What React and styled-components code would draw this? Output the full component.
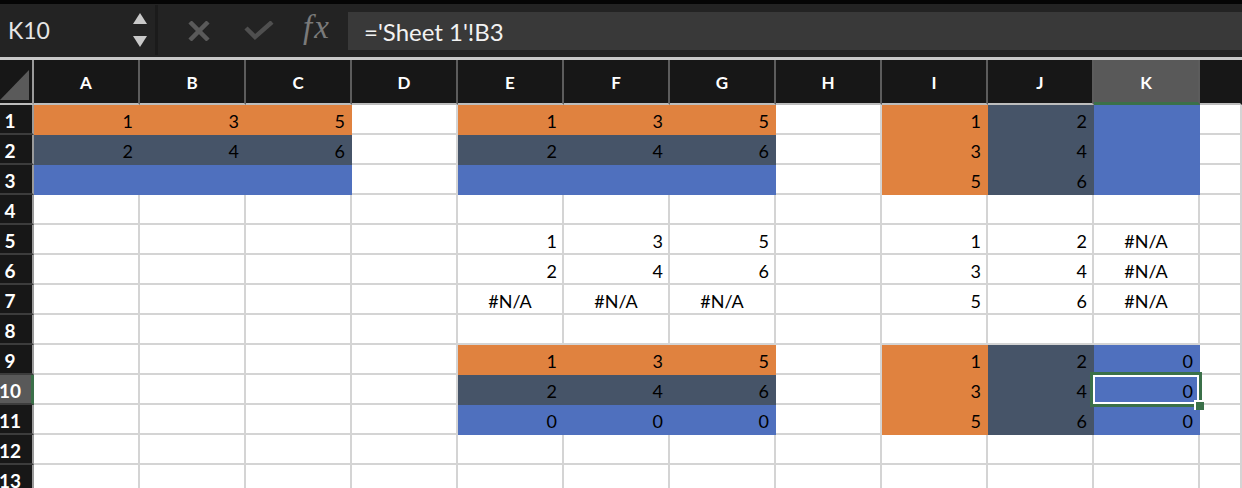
import React from 'react';
import styled, { createGlobalStyle } from 'styled-components';

const GlobalStyle = createGlobalStyle`
  html, body {
    margin: 0;
    padding: 0;
    background: #ffffff;
    overflow: hidden;
  }
`

const ORANGE = '#e0823f'
const SLATE = '#465468'
const BLUE = '#4f70be'
const GRID = '#d4d4d4'

const Window = styled.div`
  width: 1242px;
  height: 488px;
  overflow: hidden;
  display: flex;
  flex-direction: column;
  font-family: Lato, "Open Sans", sans-serif;
`
const TopStrip = styled.div`
  height: 4px;
  background: #050505;
  flex-shrink: 0;
`
const Toolbar = styled.div`
  height: 53px;
  flex-shrink: 0;
  display: flex;
  align-items: stretch;
  background: #232323;
`
const NameBox = styled.div`
  width: 158px;
  display: flex;
  align-items: center;
  justify-content: space-between;
  padding: 0 8px 0 8px;
  box-sizing: border-box;
  border-right: 3px solid #1b1b1b;
  margin: 1px 0 2px 0;
  color: #e6e6e6;
  font-size: 23px;
`
const Stepper = styled.div`
  display: flex;
  flex-direction: column;
  gap: 12px;
  margin-right: 0;
`
const ActionIcons = styled.div`
  display: flex;
  align-items: center;
  padding-left: 30px;
`
const IconSlot = styled.div`
  width: ${p => p.w}px;
  display: flex;
  align-items: center;
`
const Fx = styled.span`
  font-family: "Liberation Serif", "DejaVu Serif", serif;
  font-style: italic;
  font-size: 33px;
  color: #7a7a7a;
  letter-spacing: 2px;
  margin-top: -6px;
`
const FormulaInput = styled.div`
  flex: 1;
  margin: 8px 0 7px 0;
  background: #393939;
  display: flex;
  align-items: center;
  padding-left: 16px;
  color: #f2f2f2;
  font-size: 24px;
`
const Divider = styled.div`
  height: 3px;
  flex-shrink: 0;
  background: #c9c9c9;
`
const Sheet = styled.div`
  display: grid;
  grid-template-columns: 34px repeat(11, 106px) 1fr;
  grid-template-rows: 45px;
  grid-auto-rows: 30px;
  background: #ffffff;
`
const Corner = styled.div`
  background: #171717;
  border-right: 2px solid #9a9a9a;
  border-bottom: 2px solid #bdbdbd;
  position: relative;
  svg { position: absolute; left: 0; bottom: 3px; }
`
const ColHeader = styled.div`
  background: ${p => (p.active ? '#595959' : '#171717')};
  border-right: 2px solid ${p => (p.last ? '#171717' : '#5c5c5c')};
  border-bottom: ${p => (p.active ? '3px solid #3b7049' : '2px solid #bdbdbd')};
  color: #ffffff;
  font-size: 17px;
  font-weight: 700;
  display: flex;
  align-items: center;
  justify-content: center;
  padding-top: 2px;
`
const RowHeader = styled.div`
  background: ${p => (p.active ? '#595959' : '#171717')};
  border-right: ${p => (p.active ? '3px solid #3b7049' : '2px solid #9a9a9a')};
  border-bottom: 2px solid #3c3c3c;
  color: #ffffff;
  font-size: 19px;
  font-weight: 700;
  display: flex;
  align-items: center;
  justify-content: center;
  padding-right: ${p => (p.active ? 11 : 12)}px;
  padding-top: 2px;
`
const Cell = styled.div`
  position: relative;
  z-index: ${p => (p.selected ? 3 : 1)};
  background: ${p => p.fill || '#ffffff'};
  border-right: 2px solid ${p => p.fill || GRID};
  border-bottom: 2px solid ${p => p.fill || GRID};
  color: #000000;
  font-size: 18px;
  display: flex;
  align-items: center;
  justify-content: ${p => (p.error ? 'center' : 'flex-end')};
  padding-top: 3px;
  padding-right: ${p => (p.error ? 0 : 5)}px;
`
const Selection = styled.div`
  position: absolute;
  left: -4px;
  top: -3px;
  width: 112px;
  height: 35px;
  box-sizing: border-box;
  border: 3px solid #3b7049;
  pointer-events: none;
  &::before {
    content: '';
    position: absolute;
    inset: 0;
    border: 2px solid #ffffff;
  }
`
const Handle = styled.div`
  position: absolute;
  right: -5px;
  bottom: -6px;
  width: 8px;
  height: 8px;
  background: #3b7049;
  border-left: 2px solid #ffffff;
  border-top: 2px solid #ffffff;
`

const COLS = ['A', 'B', 'C', 'D', 'E', 'F', 'G', 'H', 'I', 'J', 'K', '']
const O = ORANGE, S = SLATE, B = BLUE

// [value, fill] per column A..L
const rows = [
  [[1, O], [3, O], [5, O], [], [1, O], [3, O], [5, O], [], [1, O], [2, S], ['', B], []],
  [[2, S], [4, S], [6, S], [], [2, S], [4, S], [6, S], [], [3, O], [4, S], ['', B], []],
  [['', B], ['', B], ['', B], [], ['', B], ['', B], ['', B], [], [5, O], [6, S], ['', B], []],
  [],
  [[], [], [], [], [1], [3], [5], [], [1], [2], ['#N/A'], []],
  [[], [], [], [], [2], [4], [6], [], [3], [4], ['#N/A'], []],
  [[], [], [], [], ['#N/A'], ['#N/A'], ['#N/A'], [], [5], [6], ['#N/A'], []],
  [],
  [[], [], [], [], [1, O], [3, O], [5, O], [], [1, O], [2, S], [0, B], []],
  [[], [], [], [], [2, S], [4, S], [6, S], [], [3, O], [4, S], [0, B], []],
  [[], [], [], [], [0, B], [0, B], [0, B], [], [5, O], [6, S], [0, B], []],
  [],
  [],
]

function App() {
  return (
    <Window>
      <GlobalStyle />
      <TopStrip />
      <Toolbar>
        <NameBox>
          <span>K10</span>
          <Stepper>
            <svg width="14" height="11" viewBox="0 0 14 11"><polygon points="7,0 14,11 0,11" fill="#c9c9c9" /></svg>
            <svg width="14" height="11" viewBox="0 0 14 11"><polygon points="0,0 14,0 7,11" fill="#c9c9c9" /></svg>
          </Stepper>
        </NameBox>
        <ActionIcons>
          <IconSlot w={56}>
            <svg width="22" height="20" viewBox="0 0 22 20">
              <path d="M2 1 L20 19 M20 1 L2 19" stroke="#5a5a5a" strokeWidth="4.5" />
            </svg>
          </IconSlot>
          <IconSlot w={59}>
            <svg width="30" height="20" viewBox="0 0 30 20">
              <path d="M2 7 L11 16 L28 1" stroke="#4f4f4f" strokeWidth="4.5" fill="none" />
            </svg>
          </IconSlot>
          <IconSlot w={45}>
            <Fx>fx</Fx>
          </IconSlot>
        </ActionIcons>
        <FormulaInput>='Sheet 1'!B3</FormulaInput>
      </Toolbar>
      <Divider />
      <Sheet>
        <Corner>
          <svg width="29" height="30" viewBox="0 0 29 30"><polygon points="29,0 29,30 0,30" fill="#5a5a5a" /></svg>
        </Corner>
        {COLS.map((c, i) => (
          <ColHeader key={i} active={c === 'K'} last={c === ''}>{c}</ColHeader>
        ))}
        {rows.map((row, r) => (
          <React.Fragment key={r}>
            <RowHeader active={r === 9}>{r + 1}</RowHeader>
            {COLS.map((c, ci) => {
              const [value, fill] = row[ci] || []
              const selected = r === 9 && c === 'K'
              return (
                <Cell key={ci} fill={fill} error={value === '#N/A'} selected={selected}>
                  {value}
                  {selected && (
                    <Selection>
                      <Handle />
                    </Selection>
                  )}
                </Cell>
              )
            })}
          </React.Fragment>
        ))}
      </Sheet>
    </Window>
  );
}

export default App;
